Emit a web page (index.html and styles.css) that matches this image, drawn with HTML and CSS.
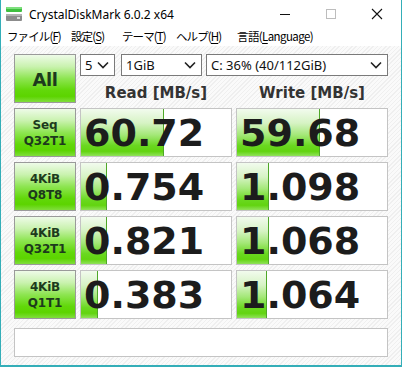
FILE: index.html
```html
<!DOCTYPE html>
<html lang="ja">
<head>
<meta charset="utf-8">
<title>CrystalDiskMark</title>
<link rel="stylesheet" href="styles.css">
</head>
<body>
<div class="window">
  <div class="titlebar">
    <svg class="app-icon" width="18" height="16" viewBox="0 0 18 16">
      <rect x="1" y="1" width="16" height="5" rx="1" fill="#3fbf3f"/>
      <rect x="1" y="1" width="16" height="2" rx="1" fill="#7ee07e"/>
      <rect x="1" y="8" width="16" height="7" rx="1" fill="#8c8c8c"/>
      <rect x="1" y="8" width="16" height="2" fill="#b4b4b4"/>
      <rect x="12" y="11" width="3" height="2" fill="#dcdcdc"/>
    </svg>
    <span class="title">CrystalDiskMark 6.0.2 x64</span>
    <div class="controls">
      <svg class="ctl" width="46" height="28" viewBox="0 0 46 28"><line x1="18" y1="14.5" x2="28" y2="14.5" stroke="#111" stroke-width="1"/></svg>
      <svg class="ctl" width="46" height="28" viewBox="0 0 46 28"><rect x="18.5" y="9.5" width="9" height="9" fill="none" stroke="#bdbdbd" stroke-width="1"/></svg>
      <svg class="ctl" width="46" height="28" viewBox="0 0 46 28"><path d="M18 9 L28 19 M28 9 L18 19" stroke="#111" stroke-width="1.1"/></svg>
    </div>
  </div>
  <div class="menubar">
    <span class="menu m-file">ファイル(<u>F</u>)</span>
    <span class="menu m-set">設定(<u>S</u>)</span>
    <span class="menu m-theme">テーマ(<u>T</u>)</span>
    <span class="menu m-help">ヘルプ(<u>H</u>)</span>
    <span class="menu m-lang">言語(<u>L</u>anguage)</span>
  </div>
  <div class="client">
    <div class="grid">
      <div class="btn btn-all">All</div>
      <div class="topright">
        <div class="selects">
          <div class="select s-count">5<svg class="chev" width="12" height="8" viewBox="0 0 12 8"><path d="M1 1.5 L6 6.5 L11 1.5" fill="none" stroke="#222" stroke-width="1.6"/></svg></div>
          <div class="select s-size">1GiB<svg class="chev" width="12" height="8" viewBox="0 0 12 8"><path d="M1 1.5 L6 6.5 L11 1.5" fill="none" stroke="#222" stroke-width="1.6"/></svg></div>
          <div class="select s-drive">C: 36% (40/112GiB)<svg class="chev" width="12" height="8" viewBox="0 0 12 8"><path d="M1 1.5 L6 6.5 L11 1.5" fill="none" stroke="#222" stroke-width="1.6"/></svg></div>
        </div>
        <div class="heads">
          <div class="head">Read [MB/s]</div>
          <div class="head">Write [MB/s]</div>
        </div>
      </div>

      <div class="btn btn-test">Seq<br>Q32T1</div>
      <div class="val"><div class="bar" style="width:83px"></div><span class="num">60.72</span></div>
      <div class="val"><div class="bar" style="width:83px"></div><span class="num">59.68</span></div>

      <div class="btn btn-test">4KiB<br>Q8T8</div>
      <div class="val"><div class="bar" style="width:26px"></div><span class="num">0.754</span></div>
      <div class="val"><div class="bar" style="width:32px"></div><span class="num">1.098</span></div>

      <div class="btn btn-test">4KiB<br>Q32T1</div>
      <div class="val"><div class="bar" style="width:26px"></div><span class="num">0.821</span></div>
      <div class="val"><div class="bar" style="width:32px"></div><span class="num">1.068</span></div>

      <div class="btn btn-test">4KiB<br>Q1T1</div>
      <div class="val"><div class="bar" style="width:17px"></div><span class="num">0.383</span></div>
      <div class="val"><div class="bar" style="width:30px"></div><span class="num">1.064</span></div>
    </div>
    <div class="comment"></div>
  </div>
</div>
</body>
</html>
```

FILE: styles.css
```css
* { box-sizing: border-box; }
html, body { margin: 0; padding: 0; background: #fff; }
body { width: 402px; height: 367px; overflow: hidden; }

.window {
  width: 402px;
  height: 367px;
  border-left: 1px solid #34aeb8;
  border-right: 1px solid #34aeb8;
  border-bottom: 2px solid #34aeb8;
  display: flex;
  flex-direction: column;
  background: #fff;
  font-family: "Noto Sans", "Noto Sans CJK JP", sans-serif;
}

.titlebar {
  height: 28px;
  display: flex;
  align-items: center;
  padding-left: 4px;
  background: #fff;
}
.app-icon { margin-right: 6px; }
.title { font-size: 12px; color: #000; flex: 1; line-height: 1; padding-top: 1px; }
.controls { display: flex; margin-right: 1px; }
.ctl { display: block; }

.menubar {
  height: 18px;
  display: flex;
  align-items: center;
  padding-left: 6px;
  font-size: 11.5px;
  color: #000;
  background: #fff;
}
.menu {
  line-height: 1;
  font-family: "Noto Sans CJK JP", "Noto Sans", sans-serif;
  letter-spacing: -0.9px;
  white-space: nowrap;
}
.m-file { width: 64px; }
.m-set { width: 51px; }
.m-theme { width: 54px; }
.m-help { width: 61px; }
.m-lang { letter-spacing: -0.6px; }
.menu u { text-decoration: underline; text-underline-offset: 2px; }

.client {
  flex: 1;
  padding: 8px 13px 0 13px;
  background-color: #f6f6f6;
  background-image: repeating-linear-gradient(135deg, #fafafa 0px, #fafafa 2px, #efefef 2px, #efefef 3px);
}

.grid {
  display: grid;
  grid-template-columns: 62px 152px 152px;
  grid-template-rows: 49px 49px 49px 49px 49px;
  column-gap: 4px;
  row-gap: 5px;
}

.btn {
  border: 1px solid #9a9a9a;
  background: linear-gradient(to bottom, #eefbe8 0%, #c9f2ae 25%, #8ee552 50%, #62d80a 75%, #5cd400 88%, #80de3c 100%);
  display: flex;
  align-items: center;
  justify-content: center;
  text-align: center;
  font-family: "DejaVu Sans", sans-serif;
  font-weight: bold;
  color: #1d3a1d;
}
.btn-all { font-size: 18px; letter-spacing: -0.5px; padding-top: 1px; }
.btn-test { font-size: 12px; line-height: 16px; letter-spacing: -0.2px; }

.topright {
  grid-column: 2 / 4;
  display: flex;
  flex-direction: column;
}
.selects { display: flex; height: 22px; }
.select {
  height: 22px;
  background: #fff;
  border: 1px solid #7a7a7a;
  display: flex;
  align-items: center;
  justify-content: space-between;
  padding: 0 5px 0 4px;
  font-size: 13px;
  color: #111;
  font-family: "Noto Sans", sans-serif;
}
.s-count { width: 35px; margin-right: 6px; }
.s-size { width: 81px; margin-right: 4px; }
.s-drive { width: 182px; }
.chev { display: block; }

.heads {
  flex: 1;
  display: grid;
  grid-template-columns: 152px 152px;
  column-gap: 4px;
  align-items: center;
}
.head {
  text-align: center;
  font-family: "DejaVu Sans", sans-serif;
  font-weight: bold;
  font-size: 15px;
  color: #333;
  padding-top: 6px;
}

.val {
  position: relative;
  background: #fff;
  border: 1px solid #c4c4c4;
  display: flex;
  align-items: center;
  overflow: hidden;
}
.bar {
  position: absolute;
  left: 0;
  top: 0;
  bottom: 0;
  background: linear-gradient(to bottom, #f2fbee 0%, #d6f3c4 30%, #a4e878 55%, #6ad820 78%, #62d410 90%, #90e25a 100%);
  border-right: 1px solid #4ea828;
}
.num {
  position: relative;
  padding-left: 3px;
  font-family: "DejaVu Sans", sans-serif;
  font-weight: bold;
  font-size: 38px;
  color: #1c1c1c;
  line-height: 1;
}

.comment {
  margin-top: 9px;
  height: 29px;
  width: 374px;
  background: #fff;
  border: 1px solid #c4c4c4;
}
```
